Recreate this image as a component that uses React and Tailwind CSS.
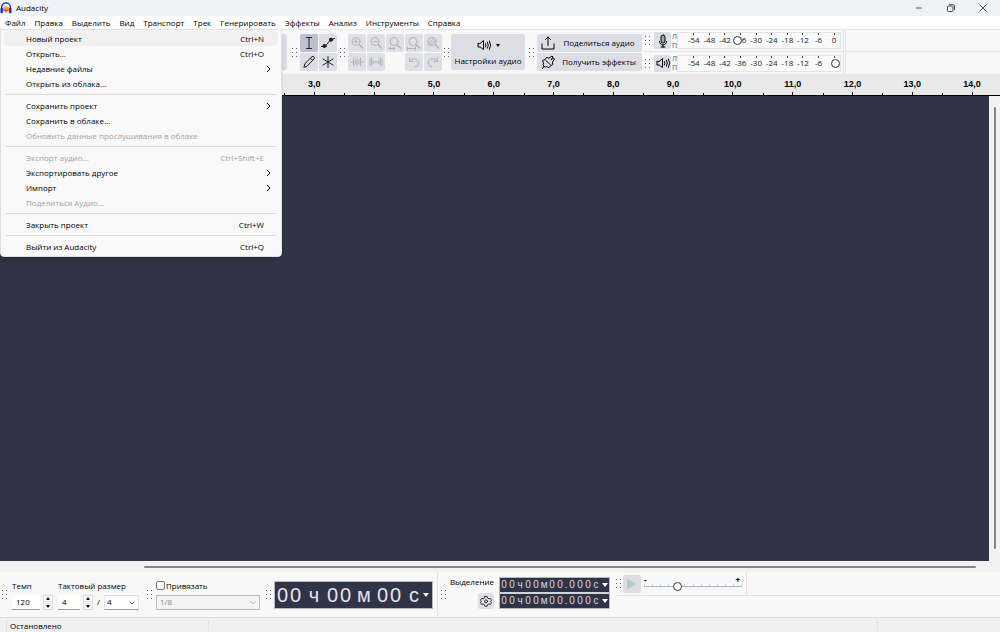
import React, { useState } from 'react';

const menuBar = ['Файл', 'Правка', 'Выделить', 'Вид', 'Транспорт', 'Трек', 'Генерировать', 'Эффекты', 'Анализ', 'Инструменты', 'Справка'];

const fileMenu = [
  [
    { label: 'Новый проект', keys: 'Ctrl+N', active: true },
    { label: 'Открыть...', keys: 'Ctrl+O' },
    { label: 'Недавние файлы', sub: true },
    { label: 'Открыть из облака...' },
  ],
  [
    { label: 'Сохранить проект', sub: true },
    { label: 'Сохранить в облаке...' },
    { label: 'Обновить данные прослушивания в облаке', disabled: true },
  ],
  [
    { label: 'Экспорт аудио...', keys: 'Ctrl+Shift+E', disabled: true },
    { label: 'Экспортировать другое', sub: true },
    { label: 'Импорт', sub: true },
    { label: 'Поделиться Аудио...', disabled: true },
  ],
  [{ label: 'Закрыть проект', keys: 'Ctrl+W' }],
  [{ label: 'Выйти из Audacity', keys: 'Ctrl+Q' }],
];

const seconds = ['0,0', '1,0', '2,0', '3,0', '4,0', '5,0', '6,0', '7,0', '8,0', '9,0', '10,0', '11,0', '12,0', '13,0', '14,0'];
const levels = ['-54', '-48', '-42', '-36', '-30', '-24', '-18', '-12', '-6', '0'];

const Svg = ({ className = 'size-4', children }) => (
  <svg viewBox="0 0 16 16" className={className} fill="none" stroke="currentColor" strokeWidth="1" strokeLinecap="round" strokeLinejoin="round" aria-hidden="true">
    {children}
  </svg>
);

const Logo = () => (
  <svg viewBox="0 0 12 12" className="size-3" aria-hidden="true">
    <path d="M1.6 7V5.2a4.4 4.4 0 0 1 8.8 0V7" fill="none" stroke="#1c1f9c" strokeWidth="1.3" />
    <path d="M2.900 7 4 4.600l.8.9L6 3.400l1.200 2.100.8-.9L9.100 7 8 9.600l-.9-.8L6 10.800 4.900 8.800l-.9.8z" fill="#f9a51b" />
    <path d="M2.900 7.400h6.200L8 9.600l-.9-.8L6 10.800 4.900 8.800l-.9.8z" fill="#e4501e" />
    <rect x="0.500" y="5.800" width="2.400" height="5.400" rx="1" fill="#2327c4" />
    <rect x="9.100" y="5.800" width="2.400" height="5.400" rx="1" fill="#2327c4" />
  </svg>
);

const Grip = () => (
  <div className="grid shrink-0 grid-cols-2 gap-[3px]">
    {Array.from({ length: 6 }, (_, i) => (
      <span key={i} className="size-px bg-[#66666c]" />
    ))}
  </div>
);

const SpeakerIcon = () => (
  <Svg>
    <path d="M2 6.500v3.500h2.200L7.500 12.500v-9L4.200 6.500z" />
    <path d="M9.500 6.500q1 1.700 0 3.500M11.500 5.200q1.700 3 0 6M13.500 4q2.400 4.200 0 8.400" />
  </Svg>
);

const MicIcon = () => (
  <Svg>
    <rect x="6" y="2" width="4" height="8" rx="2" fill="#a5a6af" />
    <path d="M4.500 8.500c0 4.700 7 4.700 7 0M8 12v2M6 14h4" />
  </Svg>
);

const Magnifier = ({ children }) => (
  <Svg>
    <circle cx="7" cy="6.500" r="4" />
    <path d="m10 9.500 3.500 3.500" strokeWidth="1.400" />
    {children}
  </Svg>
);

const tools = [
  { name: 'Выделение', on: true, icon: <Svg><path d="M5.500 2.500h5M5.500 13.500h5M8 2.500v11" /></Svg> },
  { name: 'Огибающая', icon: <Svg><path d="M3.500 11c5 0 3.500-5.500 9-6.500" /><circle cx="4.500" cy="11" r="1.600" fill="currentColor" /><circle cx="11" cy="4.700" r="1.600" fill="currentColor" /><path d="M1.500 11.500h2M12 4.200l2.500-.7" /></Svg> },
  { name: 'Рисование', icon: <Svg><path d="m3 13 1-3.500L11 2.700q1-.8 1.900.2t.1 2L6.300 12z" /><path d="m9.500 4.200 2.300 2.300" /></Svg> },
  { name: 'Мультиинструмент', icon: <Svg><path d="M8 2.500v11M3 5l10 6M13 5 3 11" /></Svg> },
];

const edits = [
  { name: 'Приблизить', icon: <Magnifier><path d="M5.200 6.500h3.600M7 4.700v3.600" /></Magnifier> },
  { name: 'Отдалить', icon: <Magnifier><path d="M5.200 6.500h3.600" /></Magnifier> },
  { name: 'По выделению', icon: <Magnifier><path d="M2 13.500h6M3.500 12.300 2 13.500l1.500 1.200M6.500 12.300 8 13.500l-1.500 1.200" /></Magnifier> },
  { name: 'По ширине', icon: <Magnifier><path d="M1.500 13.500h8M1.500 12v3M9.500 12v3" /></Magnifier> },
  { name: 'Переключить масштаб', icon: <Magnifier><path d="M3 9.500 9 3.200M4.500 11.500 10.500 5" /></Magnifier> },
  { name: 'Обрезать', icon: <Svg><path d="M1.500 8H4M12 8h2.500M4.500 4.500v7M6.200 6v4M8 4.500v7M9.800 6v4M11.500 4.500v7" /></Svg> },
  { name: 'Тишина', icon: <Svg><path d="M2 5v6M3.500 4v8M5 6v4M5 8h6M11 6v4M12.500 4v8M14 5v6" /></Svg> },
  null,
  { name: 'Отменить', icon: <Svg><path d="M3.500 4v3.500H7M3.500 7.500c2-4 9.500-3.500 9 1.500-.2 2-1.500 3.500-3.500 3.800" /></Svg> },
  { name: 'Повторить', icon: <Svg><path d="M12.500 4v3.500H9M12.500 7.500c-2-4-9.500-3.500-9 1.500.2 2 1.500 3.500 3.500 3.800" /></Svg> },
];

const WindowButton = ({ name, children }) => (
  <button type="button" aria-label={name} className="flex h-4 w-8 items-center justify-center">
    <svg viewBox="0 0 8 8" className="size-2" fill="none" stroke="#222" strokeWidth="0.800" aria-hidden="true">{children}</svg>
  </button>
);

const FileMenu = () => (
  <div role="menu" className="absolute top-[29px] left-0 z-10 w-[282px] rounded-b border border-[#e0e0e0] bg-[#f9f9f9] px-[3px] pt-px pb-[2px] shadow-md">
    {fileMenu.map((group, g) => (
      <div key={g} className={g > 0 ? 'relative mt-[7px] before:absolute before:inset-x-[2px] before:-top-1 before:h-px before:bg-[#dcdcdc]' : ''}>
        {group.map((item) => (
          <button
            key={item.label}
            type="button"
            role="menuitem"
            disabled={item.disabled}
            className={`flex h-[15px] w-full items-center rounded-sm pr-[14px] pl-[22px] ${item.active ? 'bg-[#f0f0f0]' : ''} ${item.disabled ? 'text-[#a2a2a2]' : 'text-black'}`}
          >
            <span className="flex-1 text-left">{item.label}</span>
            {item.keys && <span>{item.keys}</span>}
            {item.sub && (
              <svg viewBox="0 0 5 8" className="-mr-[7px] h-2 w-[5px]" fill="none" stroke="currentColor" aria-hidden="true">
                <path d="m1 1 3 3-3 3" />
              </svg>
            )}
          </button>
        ))}
      </div>
    ))}
  </div>
);

const Meter = ({ name, icon, value, onChange }) => (
  <div className="flex h-[22px] items-center">
    <Grip />
    <button type="button" aria-label={name} className="ml-1 flex size-[17px] shrink-0 items-center justify-center rounded-xs bg-[#dcdde5]">{icon}</button>
    <div className="ml-px w-[5px] text-[7px] leading-[9px] text-[#555]">
      <div>Л</div>
      <div>П</div>
    </div>
    <div className="relative h-[17px] w-[164px] border border-[#e3e3e5] bg-[#fafafa]">
      <div className="-mr-[2px] flex pl-[8px]">
        {levels.map((l) => (
          <div key={l} className="flex w-4 shrink flex-col items-center text-[8px] leading-[10px] text-[#222]">
            <span className="h-[2px] w-px bg-[#444]" />
            <span>{l}</span>
          </div>
        ))}
      </div>
      <input
        type="range"
        aria-label={name}
        value={value}
        onChange={(e) => onChange(Number(e.target.value))}
        className="absolute inset-x-0 top-[3px] h-[9px] w-full appearance-none bg-transparent [&::-webkit-slider-thumb]:size-[9px] [&::-webkit-slider-thumb]:appearance-none [&::-webkit-slider-thumb]:rounded-full [&::-webkit-slider-thumb]:border [&::-webkit-slider-thumb]:border-[#333] [&::-webkit-slider-thumb]:bg-white"
      />
    </div>
    <div className="ml-[2px] h-full w-[3px] border-x border-[#e4e4e6]" />
  </div>
);

const Spinner = ({ id, value, onChange, label, className }) => (
  <div className="flex items-center gap-[3px]">
    <input id={id} aria-label={label} value={value} onChange={(e) => onChange(Number(e.target.value) || 0)} className={`h-[15px] border-b border-[#999] bg-white pl-1 ${className}`} />
    <div className="flex flex-col gap-px">
      <button type="button" aria-label={`${label} +`} onClick={() => onChange(value + 1)} className="flex h-[7px] w-[10px] items-center justify-center border border-[#ddd] bg-[#fdfdfd]">
        <svg viewBox="0 0 4 3" className="h-[3px] w-1" aria-hidden="true"><path d="M0 3 2 0l2 3z" /></svg>
      </button>
      <button type="button" aria-label={`${label} -`} onClick={() => onChange(value - 1)} className="flex h-[7px] w-[10px] items-center justify-center border border-[#ddd] bg-[#fdfdfd]">
        <svg viewBox="0 0 4 3" className="h-[3px] w-1" aria-hidden="true"><path d="m0 0 2 3 2-3z" /></svg>
      </button>
    </div>
  </div>
);

const Chevron = ({ className }) => (
  <svg viewBox="0 0 6 4" className={`pointer-events-none absolute top-[6px] right-1 h-1 w-[6px] ${className}`} fill="none" stroke="currentColor" strokeWidth="0.800" aria-hidden="true">
    <path d="m.5.5 2.500 2.500L5.500.5" />
  </svg>
);

const SmallTime = () => (
  <div className="flex h-[14px] items-center bg-[#313347] text-[10px] leading-3 text-[#d6d6e0]">
    {'00ч00м00.000с'.split('').map((c, i) => (
      <span key={i} className={c === '.' ? 'w-1 text-center' : 'w-2 text-center'}>{c}</span>
    ))}
    <button type="button" aria-label="Формат" className="ml-[2px]">
      <svg viewBox="0 0 6 4" className="h-1 w-[6px]" fill="#fff" aria-hidden="true"><path d="M0 0h6L3 4z" /></svg>
    </button>
  </div>
);

export default function App() {
  const [tempo, setTempo] = useState(120);
  const [beats, setBeats] = useState(4);
  const [snap, setSnap] = useState(false);
  const [rec, setRec] = useState(36);
  const [play, setPlay] = useState(100);
  const [speed, setSpeed] = useState(33);

  return (
    <div className="relative flex h-screen flex-col overflow-hidden bg-[#f8f8f8] font-['Open_Sans','Noto_Sans',sans-serif] text-[8px] leading-3 text-black">
      <header className="flex h-4 shrink-0 items-center bg-[#eff3f9] pr-px">
        <Logo />
        <h1 className="ml-1 flex-1">Audacity</h1>
        <WindowButton name="Свернуть"><path d="M1 4h6" /></WindowButton>
        <WindowButton name="Развернуть"><rect x="0.500" y="2" width="5.500" height="5.500" rx="1" /><path d="M2 .7h4.300q1.200 0 1.200 1.200V6" /></WindowButton>
        <WindowButton name="Закрыть"><path d="m.5.5 7 7M7.500.5l-7 7" /></WindowButton>
      </header>

      <nav className="flex h-[13px] shrink-0 items-center gap-[9px] bg-white pl-[5px]">
        {menuBar.map((m) => (
          <button key={m} type="button">{m}</button>
        ))}
      </nav>
      <FileMenu />

      <div className="flex h-[45px] shrink-0 border-t border-[#e6e6e6]">
        <div className="flex items-center">
          <div className="h-9 w-[287px] shrink-0 rounded-xs bg-[#dcdde5]" />
          <div className="ml-[5px]"><Grip /></div>
          <div className="ml-[3px] grid grid-cols-2 gap-px">
            {tools.map((t) => (
              <button key={t.name} type="button" aria-label={t.name} className={`flex size-[18px] items-center justify-center rounded-xs text-[#1f1f24] ${t.on ? 'bg-[#bfc0cd]' : 'bg-[#dcdde5]'}`}>{t.icon}</button>
            ))}
          </div>
          <div className="ml-[3px]"><Grip /></div>
          <div className="ml-[3px] grid grid-cols-5 gap-px">
            {edits.map((t, i) => t ? (
              <button key={t.name} type="button" aria-label={t.name} disabled className="flex size-[18px] items-center justify-center rounded-xs bg-[#dfe0e7] text-[#b0b1b9]">{t.icon}</button>
            ) : <span key={i} />)}
          </div>
          <div className="ml-[2px]"><Grip /></div>
          <button type="button" className="ml-[2px] flex h-9 w-[74px] flex-col items-center justify-center gap-[2px] rounded-xs bg-[#dcdde5]">
            <span className="flex items-center gap-1">
              <SpeakerIcon />
              <svg viewBox="0 0 4 3" className="h-[3px] w-1" aria-hidden="true"><path d="M0 0h4L2 3z" /></svg>
            </span>
            <span>Настройки аудио</span>
          </button>
          <div className="ml-[4px]"><Grip /></div>
          <div className="ml-[3px] flex w-[105px] flex-col gap-px">
            <button type="button" className="flex h-[18px] items-center rounded-xs bg-[#dcdde5] pl-[3px]">
              <Svg><path d="M2 9v5h12V9M8 10.500V2M5.500 4.500 8 2l2.500 2.500" /></Svg>
              <span className="flex-1 text-center">Поделиться аудио</span>
            </button>
            <button type="button" className="flex h-[18px] items-center rounded-xs bg-[#dcdde5] pl-[3px]">
              <Svg><path d="M2.500 14.500 4 12.500M4 12.500q-1.500-2-.5-3.500L2.500 6.500 5 5.500l1.500-2 2.500.7L12 2l1 1-2 3 2.500-2 1 1-2 3 .3 2.500-2.300 1.200-1.500 2-2.300-1q-1.400.8-2.700-.2M6 6.500l4 4" /></Svg>
              <span className="flex-1 text-center">Получить эффекты</span>
            </button>
          </div>
        </div>
        <div className="ml-[3px] flex flex-1 flex-col divide-y divide-[#e4e4e6]">
          <Meter name="Уровень записи" icon={<MicIcon />} value={rec} onChange={setRec} />
          <Meter name="Уровень воспроизведения" icon={<SpeakerIcon />} value={play} onChange={setPlay} />
        </div>
      </div>

      <div className="flex h-[22px] shrink-0 overflow-hidden border-b border-black bg-[#e9e9ea] pl-[105px] font-['Liberation_Sans',sans-serif] text-[9px] font-bold">
        <div className="-mr-[2px] flex flex-1 items-end">
          {seconds.map((s) => (
            <div key={s} className="relative flex h-full flex-1 flex-col items-center justify-end before:absolute before:bottom-0 before:left-0 before:h-[2px] before:w-px before:bg-black">
              <span>{s}</span>
              <span className="mt-[2px] h-[3px] w-px bg-black" />
            </div>
          ))}
        </div>
      </div>

      <main className="flex min-h-0 flex-1">
        <div className="flex-1 bg-[#313347]" />
        <div className="flex w-[11px] justify-center bg-[#f2f2f3] pt-[11px] pb-3">
          <div className="w-[2px] rounded bg-[#868686]" />
        </div>
      </main>
      <div className="flex h-[11px] shrink-0 items-center bg-[#f1f1f2] pr-6 pl-36">
        <div className="h-[2px] flex-1 rounded bg-[#868686]" />
      </div>

      <div className="flex h-[46px] shrink-0 border-b border-[#dedede]">
        <div className="flex items-center pl-[2px]">
          <Grip />
          <div className="ml-[5px] flex flex-col gap-[3px]">
            <label htmlFor="tempo">Темп</label>
            <Spinner id="tempo" label="Темп" value={tempo} onChange={setTempo} className="w-[28px]" />
          </div>
          <div className="ml-[5px] flex flex-col gap-[3px]">
            <label htmlFor="beats">Тактовый размер</label>
            <div className="flex items-center">
              <Spinner id="beats" label="Тактовый размер" value={beats} onChange={setBeats} className="w-[22px]" />
              <span className="px-1">/</span>
              <div className="relative">
                <select aria-label="Доля" className="h-[15px] w-[35px] appearance-none border border-[#e2e2e2] border-b-[#999] bg-white pl-[2px]">
                  <option>4</option>
                </select>
                <Chevron className="text-[#333]" />
              </div>
            </div>
          </div>
          <div className="ml-2"><Grip /></div>
          <div className="ml-1 flex flex-col gap-[3px]">
            <label className="flex items-center gap-px">
              <input type="checkbox" checked={snap} onChange={(e) => setSnap(e.target.checked)} className="size-[9px] appearance-none rounded-xs border border-[#777] bg-white checked:bg-[#777]" />
              Привязать
            </label>
            <div className="relative">
              <select aria-label="Шаг привязки" disabled={!snap} className="h-[15px] w-[104px] appearance-none border border-[#bbb] bg-[#f3f3f3] pl-[3px] text-[#8a8a8a] opacity-100">
                <option>1/8</option>
              </select>
              <Chevron className="text-[#aaa]" />
            </div>
          </div>
          <div className="ml-[6px]"><Grip /></div>
          <div className="ml-[3px] flex h-7 w-[159px] items-center border border-[#b9b9c2] bg-[#313347] pl-px font-['Liberation_Sans',sans-serif] text-[20px] leading-6 text-[#e6e6ee]">
            {'00ч00м00с'.split('').map((c, i) => (
              <span key={i} className={c === '0' ? 'w-[13px] text-center' : 'w-6 text-center'}>{c}</span>
            ))}
            <button type="button" aria-label="Формат времени" className="-ml-[3px]">
              <svg viewBox="0 0 6 4" className="h-1 w-[6px]" fill="#fff" aria-hidden="true"><path d="M0 0h6L3 4z" /></svg>
            </button>
          </div>
        </div>

        <div className="ml-1 flex items-center border-l border-[#e2e2e4] pl-[3px]">
          <Grip />
          <div className="ml-1 flex flex-col items-end gap-[5px] self-start pt-1">
            <span>Выделение</span>
            <button type="button" aria-label="Настройки выделения" className="flex size-4 items-center justify-center rounded-xs bg-[#dfe0e7]">
              <Svg className="size-3"><path d="M6.500 2h3l.6 2 1.900 1 2-.4 1.500 2.500L14 8.500l1.500 1.400L14 12.400l-2-.4-1.900 1-.6 2h-3l-.6-2-1.900-1-2 .4L.5 9.900 2 8.500.5 7.100 2 4.600l2 .4 1.900-1z" /><circle cx="8" cy="8.500" r="2" /></Svg>
            </button>
          </div>
          <div className="mt-[5px] ml-[5px] flex w-[111px] flex-col gap-[2px] self-start border border-[#b9b9c2] bg-[#d2d3db] font-['Liberation_Sans',sans-serif]">
            <SmallTime />
            <SmallTime />
          </div>
        </div>

        <div className="ml-[6px] flex flex-1 flex-col">
          <div className="flex h-6 items-center border-b border-[#e2e2e4]">
            <div className="flex h-full items-center border-r border-[#e2e2e4] pr-1">
              <Grip />
              <button type="button" aria-label="Воспроизвести" className="ml-[2px] flex size-[18px] items-center justify-center rounded-xs bg-[#dcdde5]">
                <svg viewBox="0 0 10 10" className="size-[10px]" fill="#a9cdc9" aria-hidden="true"><path d="M0 0v10l10-5z" /></svg>
              </button>
              <div className="relative mt-1 ml-[3px] w-[98px] self-start">
                <div className="flex justify-between pr-[2px] leading-[7px] font-bold"><span>-</span><span>+</span></div>
                <div className="mt-px flex h-[3px] justify-between border-b border-[#9db9da]">
                  {Array.from({ length: 13 }, (_, i) => <span key={i} className="w-px bg-[#c5d3e6]" />)}
                </div>
                <input
                  type="range"
                  aria-label="Скорость воспроизведения"
                  value={speed}
                  onChange={(e) => setSpeed(Number(e.target.value))}
                  className="absolute inset-x-0 top-[6px] h-[9px] w-full appearance-none bg-transparent [&::-webkit-slider-thumb]:size-[9px] [&::-webkit-slider-thumb]:appearance-none [&::-webkit-slider-thumb]:rounded-full [&::-webkit-slider-thumb]:border [&::-webkit-slider-thumb]:border-[#333] [&::-webkit-slider-thumb]:bg-white"
                />
              </div>
            </div>
          </div>
        </div>
      </div>

      <footer className="flex h-[14px] shrink-0 items-end bg-[#efefef] pl-[6px]">
        <span className="w-[203px] border-x border-[#e0e0e0] pl-[3px]">Остановлено</span>
        <span className="mr-[122px] h-3 flex-1 border-r border-[#e0e0e0]" />
      </footer>
    </div>
  );
}
